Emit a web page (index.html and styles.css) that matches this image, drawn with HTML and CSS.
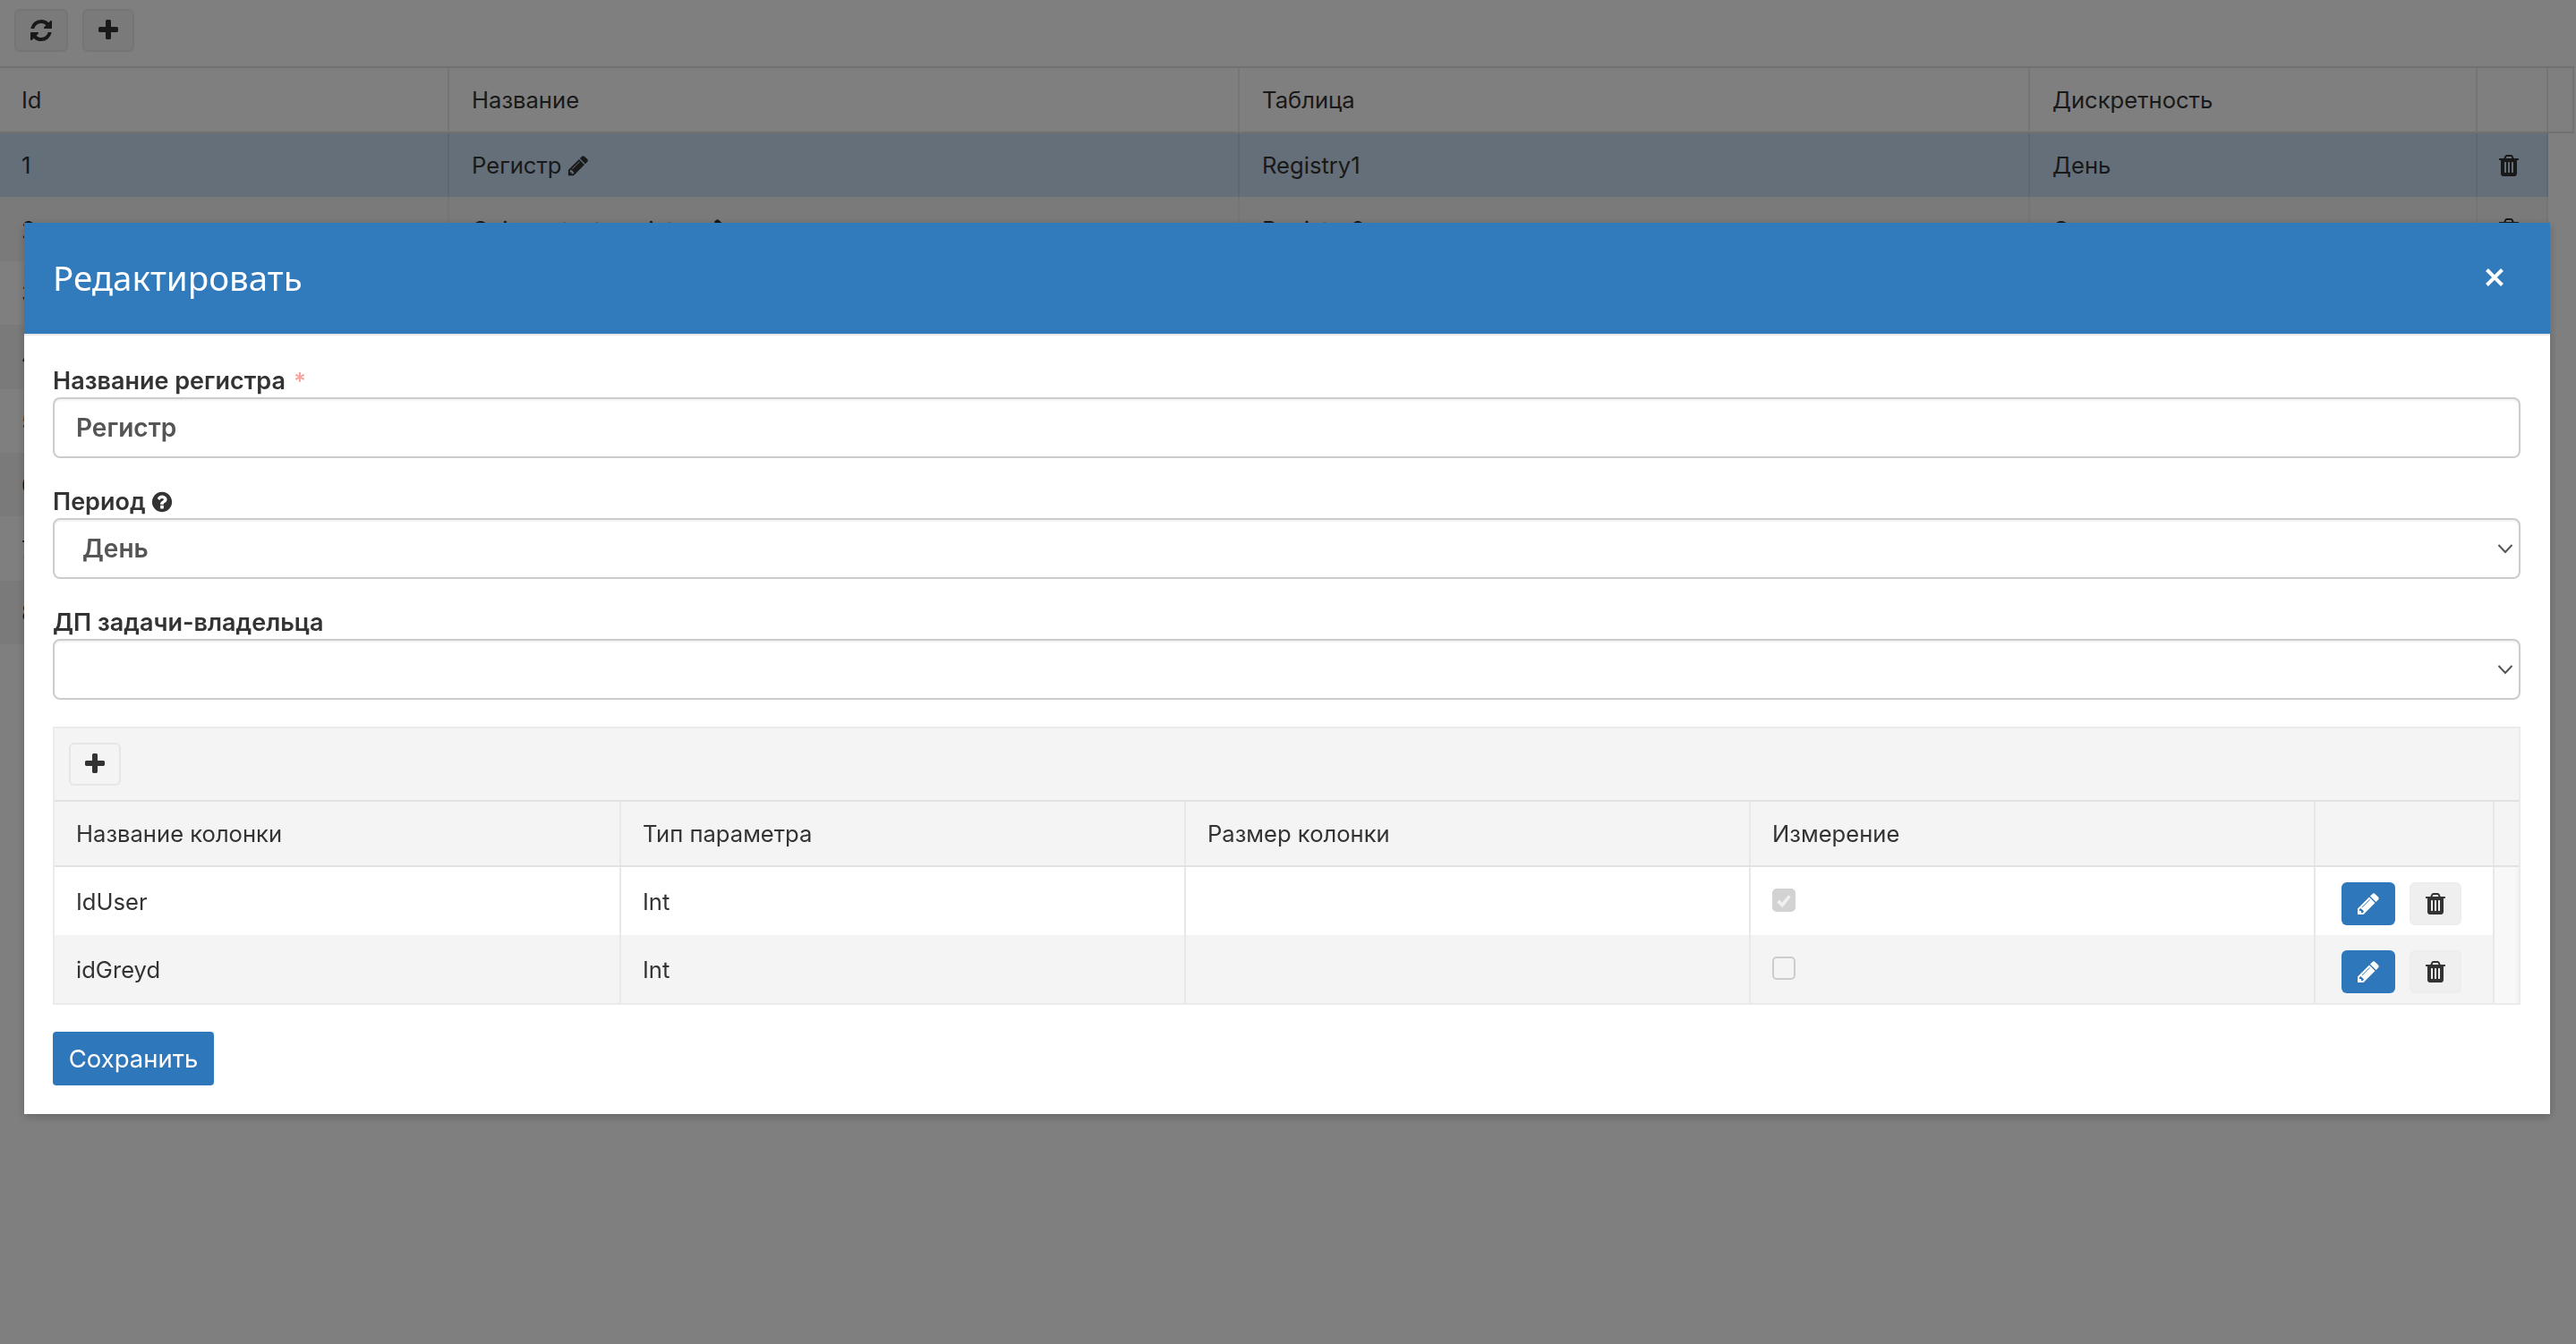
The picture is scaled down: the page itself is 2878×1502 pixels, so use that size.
FILE: index.html
```html
<!DOCTYPE html>
<html lang="ru">
<head>
    <meta charset="UTF-8">
    <title>Регистры</title>
    <link rel="stylesheet" href="styles.css">
</head>
<body>

    <svg class="icon-defs" xmlns="http://www.w3.org/2000/svg">
        <symbol id="i-refresh" viewBox="0 0 1792 1792"><path d="M1639 1056q0 5-1 7-64 268-268 434.5t-478 166.5q-146 0-282.5-55t-243.5-157l-129 129q-19 19-45 19t-45-19-19-45v-448q0-26 19-45t45-19h448q26 0 45 19t19 45-19 45l-137 137q71 66 161 102t187 36q134 0 250-65t186-179q11-17 53-117 8-23 30-23h192q13 0 22.5 9.5t9.5 22.5zm25-800v448q0 26-19 45t-45 19h-448q-26 0-45-19t-19-45 19-45l138-138q-148-137-349-137-134 0-250 65t-186 179q-11 17-53 117-8 23-30 23h-199q-13 0-22.5-9.5t-9.5-22.5v-7q65-268 270-434.5t480-166.5q146 0 284 55.5t245 156.5l130-129q19-19 45-19t45 19 19 45z"/></symbol>
        <symbol id="i-plus" viewBox="0 0 1792 1792"><path d="M1600 736v192q0 40-28 68t-68 28h-416v416q0 40-28 68t-68 28h-192q-40 0-68-28t-28-68v-416h-416q-40 0-68-28t-28-68v-192q0-40 28-68t68-28h416v-416q0-40 28-68t68-28h192q40 0 68 28t28 68v416h416q40 0 68 28t28 68z"/></symbol>
        <symbol id="i-pencil" viewBox="0 0 1792 1792"><path d="M491 1536l91-91-235-235-91 91v107h128v128h107zm523-928q0-22-22-22-10 0-17 7l-542 542q-7 7-7 17 0 22 22 22 10 0 17-7l542-542q7-7 7-17zm-54-192l416 416-832 832h-416v-416zm683 96q0 53-37 90l-166 166-416-416 166-165q36-38 90-38 53 0 91 38l235 234q37 39 37 91z"/></symbol>
        <symbol id="i-trash" viewBox="0 0 1792 1792"><path d="M704 1376v-704q0-14-9-23t-23-9h-64q-14 0-23 9t-9 23v704q0 14 9 23t23 9h64q14 0 23-9t9-23zm256 0v-704q0-14-9-23t-23-9h-64q-14 0-23 9t-9 23v704q0 14 9 23t23 9h64q14 0 23-9t9-23zm256 0v-704q0-14-9-23t-23-9h-64q-14 0-23 9t-9 23v704q0 14 9 23t23 9h64q14 0 23-9t9-23zm-544-992h448l-48-117q-7-9-17-11h-317q-10 2-17 11zm928 32v64q0 14-9 23t-23 9h-96v948q0 83-47 143.5t-113 60.5h-832q-66 0-113-58.5t-47-141.5v-952h-96q-14 0-23-9t-9-23v-64q0-14 9-23t23-9h309l70-167q15-37 54-63t79-26h320q40 0 79 26t54 63l70 167h309q14 0 23 9t9 23z"/></symbol>
        <symbol id="i-question" viewBox="0 0 1792 1792"><path d="M1024 1376v-192q0-14-9-23t-23-9h-192q-14 0-23 9t-9 23v192q0 14 9 23t23 9h192q14 0 23-9t9-23zm256-672q0-88-55.5-163t-138.5-116-170-41q-243 0-371 213-15 24 8 42l132 100q7 6 19 6 16 0 25-12 53-68 86-92 34-24 86-24 48 0 85.5 26t37.5 59q0 38-20 61t-68 45q-63 28-115.5 86.5t-52.5 125.5v36q0 14 9 23t23 9h192q14 0 23-9t9-23q0-19 21.5-49.5t54.5-49.5q32-18 49-28.5t46-35 44.5-48 28-60.5 12.5-81zm384 192q0 209-103 385.5t-279.5 279.5-385.5 103-385.5-103-279.5-279.5-103-385.5 103-385.5 279.5-279.5 385.5-103 385.5 103 279.5 279.5 103 385.5z"/></symbol>
    </svg>

    <!-- Registry list -->
    <div class="toolbar">
        <button class="btn btn-sq" type="button"><svg class="icon"><use href="#i-refresh"/></svg></button>
        <button class="btn btn-sq" type="button"><svg class="icon"><use href="#i-plus"/></svg></button>
    </div>

    <div class="grid">
        <div class="grid-row grid-head">
            <div class="cell">Id</div>
            <div class="cell">Название</div>
            <div class="cell">Таблица</div>
            <div class="cell">Дискретность</div>
            <div class="cell"></div>
            <div class="cell"></div>
        </div>
        <div class="grid-row selected">
            <div class="cell">1</div>
            <div class="cell">Регистр <svg class="icon icon-inline"><use href="#i-pencil"/></svg></div>
            <div class="cell">Registry1</div>
            <div class="cell">День</div>
            <div class="cell cell-icon"><svg class="icon"><use href="#i-trash"/></svg></div>
        </div>
        <div class="grid-row odd">
            <div class="cell">2</div>
            <div class="cell">Ocimen test_registry <svg class="icon icon-inline"><use href="#i-pencil"/></svg></div>
            <div class="cell">Registry2</div>
            <div class="cell">Смена</div>
            <div class="cell cell-icon"><svg class="icon"><use href="#i-trash"/></svg></div>
        </div>
        <div class="grid-row"><div class="cell">3</div></div>
        <div class="grid-row odd"><div class="cell">4</div></div>
        <div class="grid-row"><div class="cell">5</div></div>
        <div class="grid-row odd"><div class="cell">6</div></div>
        <div class="grid-row"><div class="cell">7</div></div>
        <div class="grid-row odd"><div class="cell">8</div></div>
    </div>

    <div class="backdrop"></div>

    <!-- Edit dialog -->
    <div class="modal">
        <div class="modal-head">
            <h4>Редактировать</h4>
            <svg class="close" viewBox="0 0 20 20"><path d="M1.5 1.5l17 17M18.5 1.5l-17 17"/></svg>
        </div>
        <form class="modal-body">
            <div class="form-group">
                <label class="field-label" for="regName">Название регистра <span class="req">*</span></label>
                <input class="field" id="regName" type="text" value="Регистр">
            </div>

            <div class="form-group">
                <label class="field-label" for="regPeriod">Период <svg class="icon icon-help"><use href="#i-question"/></svg></label>
                <div class="select-wrap">
                    <select class="field" id="regPeriod">
                        <option>День</option>
                        <option>Смена</option>
                    </select>
                    <svg class="chevron" viewBox="0 0 18 12"><path d="M1.5 2l7.5 8 7.5-8"/></svg>
                </div>
            </div>

            <div class="form-group">
                <label class="field-label" for="regOwner">ДП задачи-владельца</label>
                <div class="select-wrap">
                    <select class="field" id="regOwner"><option></option></select>
                    <svg class="chevron" viewBox="0 0 18 12"><path d="M1.5 2l7.5 8 7.5-8"/></svg>
                </div>
            </div>

            <div class="columns">
                <div class="columns-bar">
                    <button class="btn btn-sq" type="button"><svg class="icon"><use href="#i-plus"/></svg></button>
                </div>
                <div class="col-row col-head">
                    <div class="col-cell">Название колонки</div>
                    <div class="col-cell">Тип параметра</div>
                    <div class="col-cell">Размер колонки</div>
                    <div class="col-cell">Измерение</div>
                    <div class="col-cell"></div>
                    <div class="col-cell col-spare"></div>
                </div>
                <div class="col-row">
                    <div class="col-cell">IdUser</div>
                    <div class="col-cell">Int</div>
                    <div class="col-cell"></div>
                    <div class="col-cell"><span class="check checked"><svg viewBox="0 0 24 24"><path d="M5 13l5 5 9-11"/></svg></span></div>
                    <div class="col-cell col-actions">
                        <button class="btn btn-blue" type="button"><svg class="icon"><use href="#i-pencil"/></svg></button>
                        <button class="btn btn-del" type="button"><svg class="icon"><use href="#i-trash"/></svg></button>
                    </div>
                    <div class="col-cell col-spare"></div>
                </div>
                <div class="col-row striped">
                    <div class="col-cell">idGreyd</div>
                    <div class="col-cell">Int</div>
                    <div class="col-cell"></div>
                    <div class="col-cell"><span class="check"></span></div>
                    <div class="col-cell col-actions">
                        <button class="btn btn-blue" type="button"><svg class="icon"><use href="#i-pencil"/></svg></button>
                        <button class="btn btn-del" type="button"><svg class="icon"><use href="#i-trash"/></svg></button>
                    </div>
                    <div class="col-cell col-spare"></div>
                </div>
            </div>

            <button class="btn-save" type="button">Сохранить</button>
        </form>
    </div>

</body>
</html>
```

FILE: styles.css
```css
* { box-sizing: border-box; }
html, body { height: 100%; }
body { margin: 0; background: #fff; color: #333; font-family: Inter, "Noto Sans", sans-serif; font-size: 25.6px; overflow: hidden; }
.icon-defs { display: none; }
.icon { width: 28px; height: 28px; fill: currentColor; display: block; }

/* list page */
.toolbar { display: flex; gap: 16px; height: 74px; padding: 10px 0 0 16px; }
.btn { display: flex; align-items: center; justify-content: center; padding: 0; border: 2px solid #e6e6e6; border-radius: 6px; background: #f4f4f4; color: #333; }
.btn-sq { width: 60px; height: 48px; }
.toolbar .btn-sq + .btn-sq { width: 58px; }
.toolbar .btn-sq { border-color: #ebebeb; }

.grid { border-top: 2px solid #e2e2e2; margin-right: 2px; }
.grid-row { display: grid; grid-template-columns: 502px 883px 883px 500px 79px; height: 71.4px; width: 2847px; }
.grid-head { height: 73px; width: 100%; grid-template-columns: 502px 883px 883px 500px 79px 1fr; border-bottom: 2px solid #e2e2e2; }
.cell { display: flex; align-items: center; padding-left: 25px; border-right: 2px solid #eaeaea; white-space: nowrap; }
.grid-row .cell:first-child { padding-left: 24px; }
.selected { background: #c9dff2; }
.selected .cell { border-right-color: #bcd0e2; }
.odd { background: #f4f4f4; }
.cell-icon { padding-left: 21px; }
.icon-inline { width: 26px; height: 26px; margin-left: 6px; }

.backdrop { position: fixed; inset: 0; background: rgba(0, 0, 0, .5); }

/* edit dialog */
.modal { position: fixed; top: 249px; left: 27px; width: 2822px; background: #fff; box-shadow: 0 3px 10px rgba(0, 0, 0, .2); }
.modal-head { display: flex; align-items: center; justify-content: space-between; height: 126px; padding: 0 52px 2px 32px; background: #317bbc; border-bottom: 2px solid #e8e8e8; color: #fff; }
.modal-head h4 { margin: 0; font-family: "Noto Sans", sans-serif; font-size: 38.5px; font-weight: 400; }
.close { width: 20px; height: 20px; fill: none; stroke: #fff; stroke-width: 4; }
.modal-body { padding: 36px 33px 32px 32px; }

.form-group + .form-group { margin-top: 34px; }
.field-label { display: flex; align-items: flex-start; gap: 5px; height: 33px; line-height: 29px; font-weight: 600; font-size: 27px; color: #333; }
.req { color: #f8a5a0; font-size: 26px; margin-left: 4px; }
.icon-help { width: 26px; height: 26px; margin-top: 2px; }
.field { display: block; width: 100%; height: 68px; padding: 0 24px; border: 2px solid #ccc; border-radius: 8px; background: #fff; color: #555; font: 600 28px Inter, sans-serif; appearance: none; box-shadow: inset 0 2px 2px rgba(0, 0, 0, .05); }
.select-wrap { position: relative; }
.select-wrap .field { padding-left: 31px; }
.chevron { position: absolute; right: 8px; top: 28px; width: 18px; height: 12px; fill: none; stroke: #555; stroke-width: 2; }

.columns { margin-top: 30px; border: 2px solid #ebebeb; background: #f4f4f4; }
.columns-bar { height: 82px; padding: 16px 0 0 16px; border-bottom: 2px solid #e2e2e2; }
.columns-bar .btn { width: 58px; }
.col-row { display: grid; grid-template-columns: 633px 631px 631px 631px 200px 1fr; height: 76px; background: #fff; }
.col-head { height: 73px; background: #f4f4f4; border-bottom: 2px solid #e2e2e2; }
.striped { background: #f4f4f4; }
.col-cell { display: flex; align-items: center; padding-left: 24px; border-right: 2px solid #e8e8e8; }
.col-spare { background: #f8f8f8; border-right: 3px solid #f4f4f4; }
.col-head .col-spare { background: #f4f4f4; }
.col-actions { align-items: flex-start; gap: 16px; padding: 17px 0 0 29px; }
.btn-blue { width: 60px; height: 48px; border: 0; background: #2e77bb; color: #fff; }
.btn-del { width: 58px; height: 48px; border-color: #ededed; background: #efefef; }
.check { display: block; width: 26px; height: 26px; margin-top: -2px; border: 2px solid #ccc; border-radius: 5px; }
.check.checked { background: #d2d2d2; border-color: #d2d2d2; }
.check svg { display: block; width: 100%; height: 100%; fill: none; stroke: #f0f0f0; stroke-width: 4; }
.btn-save { display: block; width: 180px; height: 60px; margin-top: 30px; padding: 0; border: 0; border-radius: 4px; background: #2e77bb; color: #fff; font: 400 27.5px Inter, sans-serif; }
```
